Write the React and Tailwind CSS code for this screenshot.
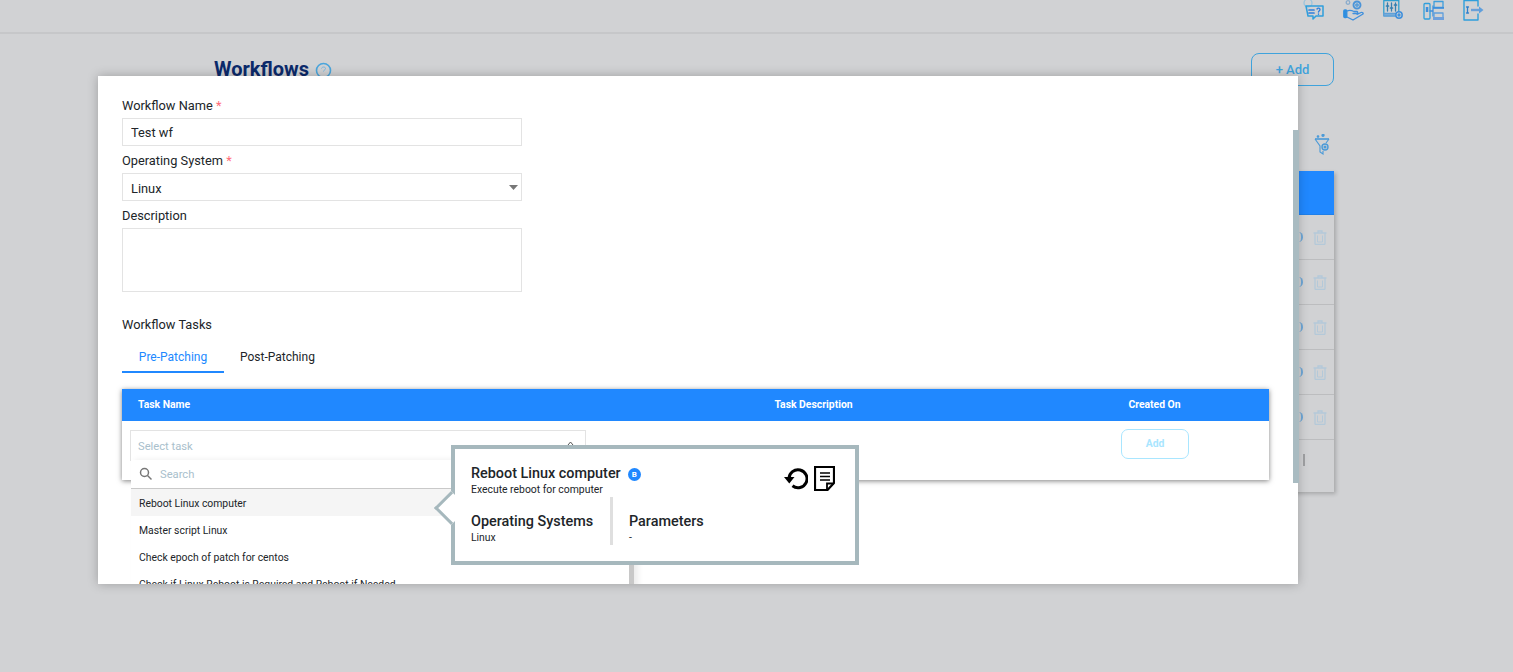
import React from "react";

const Stroke = ({ children, w = 21, h = 21, vb = "0 0 21 21" }) => (
  <svg width={w} height={h} viewBox={vb} fill="none" stroke="#3f93dc" strokeWidth="1.300" strokeLinecap="round" strokeLinejoin="round">
    {children}
  </svg>
);

const HelpChat = () => (
  <Stroke>
    <circle cx="5" cy="3" r="4" stroke="#9cc4dc" />
    <path d="M3 6h17v10h-7l-3 3v-3H5z" stroke="#2f9fdc" strokeWidth="1.500" />
    <path d="M6 10h5M6 13h5" stroke="#2f7fdc" strokeWidth="1.700" />
    <path d="M14 9c1-1.500 3-1 3 .5s-1.500 1.500-1.500 2.500M15.500 14v.3" stroke="#2f7fdc" strokeWidth="1.400" />
  </Stroke>
);
const HandGear = () => (
  <Stroke>
    <circle cx="14" cy="5" r="3.500" strokeWidth="1.900" stroke="#4b94d8" />
    <circle cx="14" cy="5" r="1.200" />
    <circle cx="5" cy="2.500" r="1.800" stroke="#8aaccc" />
    <rect x="0.800" y="10" width="3" height="7.500" rx="1" fill="#2f8fe0" stroke="#2f8fe0" />
    <path d="M4 11c3-1.500 5-.5 7 .5h3c1 0 1 2 0 2h-4M4 17l6 3 10-6c.5-1-.5-2-2-1.500l-4 1.800" stroke="#3f8fdc" />
  </Stroke>
);
const Sliders = () => (
  <Stroke>
    <rect x="0.800" y="0.500" width="15" height="15" stroke="#2f9fd0" />
    <rect x="0.800" y="13.500" width="15" height="2.500" fill="#7fb0d8" stroke="#5fa0d8" />
    <path d="M4.500 3v8M8.500 3v8M12.500 3v8" stroke="#357fb0" />
    <path d="M3.500 6h2M7.500 8h2M11.500 5h2" stroke="#357fb0" strokeWidth="1.700" />
    <circle cx="16" cy="15" r="3.200" fill="#cfd1d4" stroke="#3f8fdc" strokeWidth="1.500" />
    <circle cx="16" cy="15" r="1" fill="#3f8fdc" />
  </Stroke>
);
const Devices = () => (
  <Stroke>
    <rect x="1" y="3.500" width="6" height="15.500" rx="1" stroke="#2f9fdc" />
    <rect x="2.800" y="7" width="2.500" height="5" fill="#3f8fdc" stroke="none" />
    <path d="M7 11h3M10 6v10" stroke="#3f8fdc" />
    <rect x="11" y="1.500" width="9" height="6" stroke="#3f9fdc" />
    <rect x="10" y="7" width="11" height="1.800" fill="#3f8fdc" stroke="none" />
    <rect x="11" y="13" width="9" height="5.500" stroke="#5f9fdc" />
    <rect x="10" y="17" width="11" height="3" fill="#6fa0dc" stroke="none" />
  </Stroke>
);
const Door = () => (
  <Stroke>
    <path d="M15 6V0.500H1V20h14v-6" stroke="#2f9fdc" strokeWidth="1.400" />
    <path d="M4.500 7v6M3.500 7h2M3.500 13h2" stroke="#2f7fcc" strokeWidth="1.300" />
    <path d="M8 10h9" stroke="#6aa0d8" strokeWidth="2.400" strokeLinecap="butt" />
    <path d="M16 6.500l4.500 3.500-4.500 3.500z" fill="#5f9fdc" stroke="none" />
  </Stroke>
);
const Funnel = () => (
  <svg width="17" height="21" viewBox="0 0 17 21" fill="none" stroke="#4a9ad8" strokeWidth="1.100">
    <circle cx="4" cy="2.500" r="0.800" fill="#4a9ad8" />
    <circle cx="9" cy="1.300" r="1.100" fill="#4a9ad8" />
    <path d="M1 5h14" strokeWidth="1.600" />
    <path d="M1 5l5 7v6l3 2v-3" />
    <path d="M15 5l-3 4" />
    <circle cx="11" cy="13" r="3" strokeWidth="1.400" />
    <circle cx="11" cy="13" r="1" fill="#4a9ad8" />
  </svg>
);
const Trash = () => (
  <svg width="14" height="15" viewBox="0 0 14 15" fill="none" stroke="#b4c9d9" strokeWidth="1.300">
    <path d="M0.500 3h13M5 3V1h4v2" />
    <path d="M2 3v10.500c0 .5.500 1 1 1h8c.5 0 1-.5 1-1V3" />
    <path d="M4.500 5.500v6.500h5V5.500" strokeWidth="1" />
  </svg>
);

const Replay = () => (
  <svg width="24" height="24" viewBox="0 0 24 24" fill="none">
    <path d="M5 12.500A9 9 0 1 1 8.500 19.800" stroke="#000" strokeWidth="3" />
    <path d="M0 11h10.500l-5.200 6.500z" fill="#000" />
  </svg>
);
const Doc = () => (
  <svg width="21" height="25" viewBox="0 0 21 25" fill="none" stroke="#000">
    <path d="M1 1h19v16l-6.500 7H1z" strokeWidth="2.200" />
    <path d="M13 24v-6.500h7" strokeWidth="1.800" />
    <path d="M6 7h10M6 10.500h10M6 14h10" strokeWidth="1.300" />
  </svg>
);

const rows = [0, 1, 2, 3, 4];

function Background() {
  return (
    <div className="flex flex-col h-full">
      <header className="h-[34px] shrink-0 border-b-2 border-[#c6c7c9] flex justify-end items-start pr-[29px] gap-[19px]">
        <HelpChat />
        <HandGear />
        <Sliders />
        <Devices />
        <Door />
      </header>
      <main className="w-[1120px] ml-[214px] flex-1">
        <div className="flex items-start justify-between mt-[19px]">
          <div className="flex items-center gap-[6px] mt-[2px]">
            <h1 className="text-[20px] leading-[28px] font-bold text-[#0b2a6b]">Workflows</h1>
            <svg width="17" height="17" viewBox="0 0 17 17" fill="none" className="mt-[2px]">
              <circle cx="8.500" cy="8.500" r="7" stroke="#4aa5dc" strokeWidth="1.600" />
              <path d="M6.500 6.500c.5-2 4-2 4 0 0 1.500-2 1.500-2 3" stroke="#7ab8e0" strokeWidth="1" />
            </svg>
          </div>
          <button className="w-[83px] h-[33px] rounded-[8px] border border-[#3fa3dc] text-[13px] font-medium leading-[30px] text-[#3fa3dc]">+ Add</button>
        </div>
        <div className="flex justify-end pr-[3px] mt-[48px] h-[37px]">
          <Funnel />
        </div>
        <div className="h-[321px] shadow-[2px_2px_4px_rgba(0,0,0,0.2)] flex flex-col">
          <div className="h-[44px] bg-[#2088ff] border-b border-[#1f80ea]" />
          {rows.map((r) => (
            <div key={r} className="h-[45px] border-b border-[#bcbdbf] flex items-center justify-end pr-[7px] gap-[10px]">
              <span className="w-[9px] h-[10px] rounded-full border-r-2 border-[#6fa8d8]" />
              <Trash />
            </div>
          ))}
          <div className="flex-1 flex items-center justify-end pr-[29px]">
            <span className="w-[2px] h-[12px] bg-[#a0a1a3] mb-[12px]" />
          </div>
        </div>
      </main>
    </div>
  );
}

function Popover() {
  return (
    <div className="absolute left-[353px] top-[369px] w-[408px] h-[120px] border-[4px] border-[#a6b8bd] bg-white text-[#212529]">
      <span className="absolute left-[-16px] top-[47px] w-[24px] h-[24px] rotate-45 bg-white border-l-[3px] border-b-[3px] border-[#a6b8bd]" />
      <div className="relative flex justify-between pl-[16px] pr-[20px] pt-[16px]">
        <div>
          <div className="flex items-center gap-[7px] h-[18px]">
            <span className="text-[14.4px] font-medium leading-[18px]">Reboot Linux computer</span>
            <span className="w-[13px] h-[13px] rounded-full bg-[#2088ff] text-white text-[8px] font-bold leading-[13px] text-center">B</span>
          </div>
          <div className="text-[10.4px] leading-[14px]">Execute reboot for computer</div>
        </div>
        <div className="flex items-start gap-[6px] mt-[1px]">
          <Replay />
          <Doc />
        </div>
      </div>
      <div className="relative flex pl-[16px]">
        <div className="w-[139px] h-[48px] pt-[16px]">
          <div className="text-[14.4px] font-medium leading-[18px]">Operating Systems</div>
          <div className="text-[10.4px] leading-[14px]">Linux</div>
        </div>
        <div className="w-[3px] h-[48px] bg-[#dfdfdf]" />
        <div className="pl-[16px] pt-[16px]">
          <div className="text-[14.4px] font-medium leading-[18px]">Parameters</div>
          <div className="text-[10.4px] leading-[14px]">-</div>
        </div>
      </div>
    </div>
  );
}

function Dropdown() {
  const items = ["Reboot Linux computer", "Master script Linux", "Check epoch of patch for centos", "Check if Linux Reboot is Required and Reboot if Needed"];
  return (
    <div className="absolute left-[33px] top-[384px] w-[503px] bg-white border-r-[5px] border-[#c8c8c8] h-[140px] shadow-[4px_0_6px_rgba(0,0,0,0.08)]">
      <div className="h-[29px] border-b border-[#c9c9c9] flex items-center pl-[8px] gap-[7px] text-[11.2px] text-[#a9c0cc]">
        <svg width="14" height="14" viewBox="0 0 14 14" fill="none" stroke="#777" strokeWidth="1.500">
          <circle cx="5.500" cy="5.500" r="4" />
          <path d="M8.500 8.500l4 4" />
        </svg>
        <span className="pt-[3px]">Search</span>
      </div>
      {items.map((t, i) => (
        <div key={t} className={`h-[27px] pl-[8px] pt-[3px] flex items-center text-[10.4px] text-[#212529] ${i === 0 ? "bg-[#f5f5f5]" : ""}`}>
          {t}
        </div>
      ))}
    </div>
  );
}

function Modal() {
  const lab = "block text-[12.8px] leading-[18px] text-[#212529]";
  const inp = "block w-[400px] h-[28px] border border-[#e3e3e3] px-[8px] text-[12.8px] text-[#212529] outline-none bg-white";
  return (
    <>
      <div className="absolute left-[98px] top-[76px] w-[1200px] h-[508px] bg-white overflow-hidden shadow-[0_0_10px_rgba(0,0,0,0.25)]">
        <div className="pt-[21px] pl-[24px] pr-[29px]">
          <label className={lab}>
            Workflow Name <span className="text-[#ff6b78]">*</span>
          </label>
          <input className={`${inp} mt-[3px]`} defaultValue="Test wf" />
          <label className={`${lab} mt-[6px]`}>
            Operating System <span className="text-[#ff6b78]">*</span>
          </label>
          <div className={`${inp} mt-[3px] flex items-center justify-between pr-[2px] pt-[3px]`}>
            <span>Linux</span>
            <svg width="10" height="5" viewBox="0 0 10 5" className="mb-[3px]"><path d="M0 0h9l-4.500 5z" fill="#777" /></svg>
          </div>
          <label className={`${lab} mt-[6px]`}>Description</label>
          <div className="w-[400px] h-[64px] border border-[#e3e3e3] mt-[3px]" />
          <label className={`${lab} mt-[24px]`}>Workflow Tasks</label>
          <div className="flex mt-[6px] h-[33px] text-[12px] leading-[34px]">
            <div className="w-[102px] text-center text-[#2088ff] border-b-2 border-[#2088ff]">Pre-Patching</div>
            <div className="pl-[16px] text-[#212529]">Post-Patching</div>
          </div>
          <div className="mt-[16px] w-[1147px] shadow-[0_1px_5px_rgba(0,0,0,0.5)]">
            <div className="flex h-[32px] bg-[#2088ff] text-white text-[10.4px] font-bold items-center">
              <div className="w-[465px] pl-[16px]">Task Name</div>
              <div className="w-[453px] text-center">Task Description</div>
              <div className="w-[229px] text-center">Created On</div>
            </div>
            <div className="flex h-[59px]">
              <div className="w-[465px] pl-[8px] pt-[9px]">
                <div className="w-[456px] h-[31px] border border-[#e3e3e3] flex items-center justify-between pl-[7px] pr-[11px] pt-[4px] text-[11.2px] text-[#a9c0cc]">
                  <span>Select task</span>
                  <svg width="7" height="5" viewBox="0 0 7 5" fill="none" stroke="#555" strokeWidth="1" className="mb-[8px]"><path d="M1 4l2.500-3 2.500 3" /></svg>
                </div>
              </div>
              <div className="w-[453px]" />
              <div className="w-[229px] flex justify-center pt-[8px] pl-[1px]">
                <button className="w-[68px] h-[30px] rounded-[7px] border border-[#a9e6ff] text-[10.4px] font-bold text-[#a9e6ff]">Add</button>
              </div>
            </div>
          </div>
        </div>
        <Dropdown />
        <Popover />
      </div>
      <div className="absolute left-[1293px] top-[130px] w-[6px] h-[353px] bg-[#a9bbc1]" />
    </>
  );
}

export default function App() {
  return (
    <div className="relative w-[1513px] h-[672px] overflow-hidden bg-[#d1d2d4] [font-family:Roboto,sans-serif]">
      <Background />
      <Modal />
    </div>
  );
}
